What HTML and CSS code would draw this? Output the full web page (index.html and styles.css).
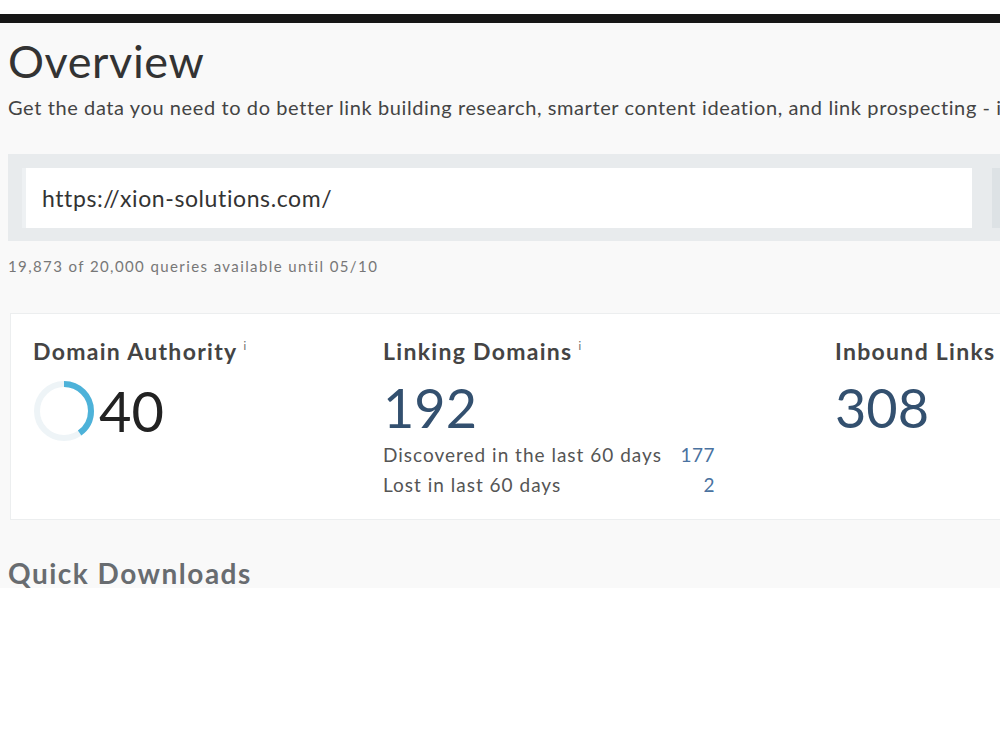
FILE: index.html
```html
<!DOCTYPE html>
<html lang="en">
<head>
  <meta charset="UTF-8" />
  <meta name="viewport" content="width=device-width, initial-scale=1.0"/>
  <title>Link Explorer - Overview</title>
  <link rel="stylesheet" href="styles.css">
</head>
<body>
  <div class="caption-bar"></div>

  <div class="page">
    <h1 class="title">Overview</h1>
    <p class="lead">Get the data you need to do better link building research, smarter content ideation, and link prospecting - in one place.</p>

    <div class="search-band">
      <input type="text" class="search-input" value="https://xion-solutions.com/" />
      <div class="search-select"></div>
    </div>
    <p class="quota">19,873 of 20,000 queries available until 05/10</p>

    <div class="metrics">
      <div class="metric">
        <div class="metric-label">Domain Authority<sup>i</sup></div>
        <div class="da-row">
          <svg class="da-ring" width="62" height="62" viewBox="0 0 62 62">
            <circle cx="31" cy="31" r="27" fill="none" stroke="#eef4f7" stroke-width="6"/>
            <circle cx="31" cy="31" r="27" fill="none" stroke="#4db2d9" stroke-width="6"
              stroke-dasharray="67.9 169.6" transform="rotate(-90 31 31)"/>
          </svg>
          <span class="da-value">40</span>
        </div>
      </div>

      <div class="metric">
        <div class="metric-label">Linking Domains<sup>i</sup></div>
        <div class="metric-value">192</div>
        <div class="stat-rows">
          <div class="stat-row"><span>Discovered in the last 60 days</span><span class="stat-num">177</span></div>
          <div class="stat-row"><span>Lost in last 60 days</span><span class="stat-num">2</span></div>
        </div>
      </div>

      <div class="metric">
        <div class="metric-label">Inbound Links<sup>i</sup></div>
        <div class="metric-value">308</div>
      </div>
    </div>

    <h2 class="section-title">Quick Downloads</h2>
  </div>
</body>
</html>
```

FILE: styles.css
```css
* {
  box-sizing: border-box;
  padding: 0;
  margin: 0;
}

body {
  font-family: 'Lato', sans-serif;
  background: #ffffff;
  color: #333;
  width: 1000px;
  height: 750px;
  overflow: hidden;
  padding-top: 14px;
}

.caption-bar {
  height: 9px;
  background: #161616;
}

.page {
  background: #f9f9f9;
  height: 565px;
  overflow: hidden;
  padding: 13px 0 0 8px;
  width: 1000px;
}

.title {
  font-size: 45px;
  font-weight: 400;
  color: #333;
  line-height: 50px;
  letter-spacing: 0.6px;
}

.lead {
  margin-top: 9px;
  font-size: 20px;
  letter-spacing: 0.6px;
  color: #444;
  white-space: nowrap;
  line-height: 24px;
}

.search-band {
  margin-top: 35px;
  width: 1100px;
  background: #e8ebed;
  padding: 14px 14px 13px;
  display: flex;
  gap: 20px;
}

.search-input {
  width: 950px;
  height: 60px;
  border: none;
  outline: none;
  background: #fff;
  padding: 0 16px;
  font-family: 'Lato', sans-serif;
  font-size: 23px;
  letter-spacing: 0.6px;
  color: #333;
  border-left: 4px solid #eef1f3;
}

.search-select {
  flex: 1;
  background: #fff;
  border-left: 12px solid #dde2e5;
}

.quota {
  margin-top: 14px;
  font-size: 15px;
  color: #777;
  line-height: 22px;
  letter-spacing: 1.4px;
}

.metrics {
  margin: 36px 0 0 2px;
  width: 1100px;
  height: 207px;
  background: #fff;
  border: 1px solid #eceeef;
  padding: 16px 0 0 22px;
  display: grid;
  grid-template-columns: 350px 452px 1fr;
}

.metric-label {
  font-size: 23px;
  font-weight: 700;
  color: #444;
  line-height: 32px;
  letter-spacing: 1.3px;
}

.metric-label sup {
  font-size: 11px;
  font-weight: 400;
  color: #666;
  vertical-align: 10px;
  margin-left: 6px;
}

.da-row {
  display: flex;
  align-items: center;
  gap: 4px;
  margin-top: 13px;
}

.da-value {
  font-size: 56px;
  color: #222;
  line-height: 56px;
}

.metric-value {
  margin-top: 9px;
  font-size: 54px;
  color: #33506f;
  line-height: 64px;
}

.stat-rows {
  width: 332px;
  font-size: 19px;
  letter-spacing: 1px;
  color: #555;
}

.stat-row {
  display: flex;
  justify-content: space-between;
  line-height: 30px;
}

.stat-num {
  color: #4a72a0;
  letter-spacing: 0.5px;
}

.section-title {
  margin-top: 36px;
  font-size: 28px;
  font-weight: 700;
  color: #686c70;
  line-height: 34px;
  letter-spacing: 1.5px;
}
```
